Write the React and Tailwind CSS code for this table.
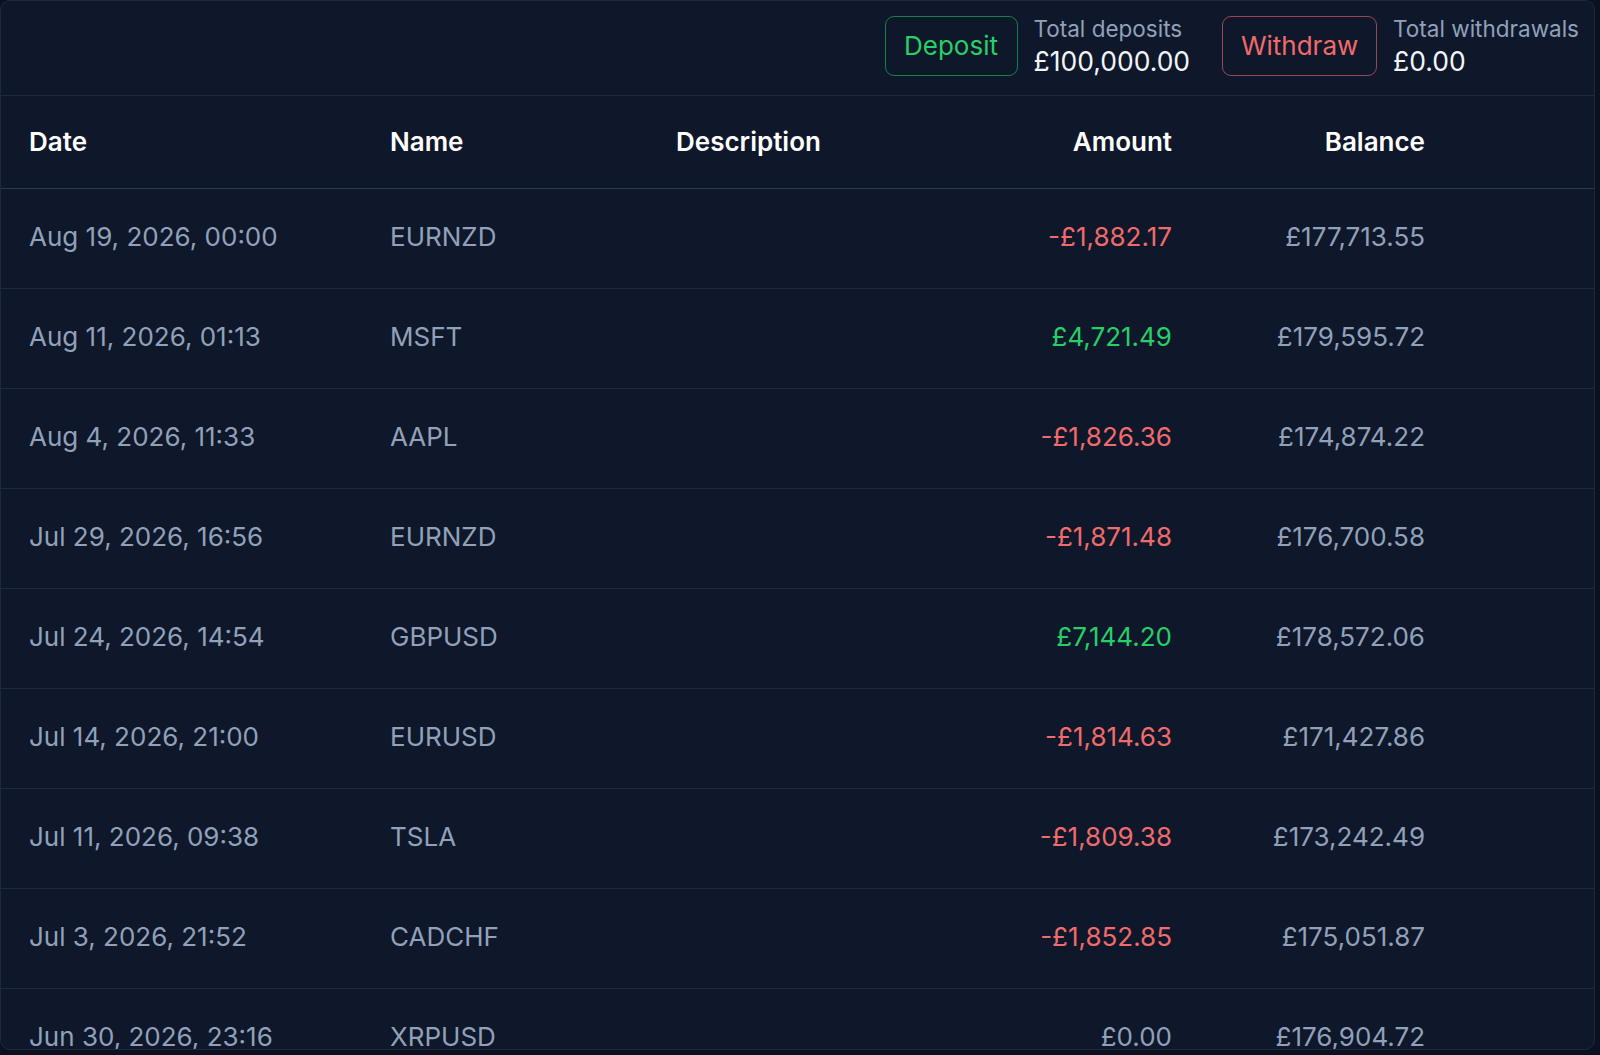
import React from "react";

// 交易流水表
const rows = [
  { date: "Aug 19, 2026, 00:00", name: "EURNZD", amount: -1882.17, balance: "£177,713.55" },
  { date: "Aug 11, 2026, 01:13", name: "MSFT", amount: 4721.49, balance: "£179,595.72" },
  { date: "Aug 4, 2026, 11:33", name: "AAPL", amount: -1826.36, balance: "£174,874.22" },
  { date: "Jul 29, 2026, 16:56", name: "EURNZD", amount: -1871.48, balance: "£176,700.58" },
  { date: "Jul 24, 2026, 14:54", name: "GBPUSD", amount: 7144.2, balance: "£178,572.06" },
  { date: "Jul 14, 2026, 21:00", name: "EURUSD", amount: -1814.63, balance: "£171,427.86" },
  { date: "Jul 11, 2026, 09:38", name: "TSLA", amount: -1809.38, balance: "£173,242.49" },
  { date: "Jul 3, 2026, 21:52", name: "CADCHF", amount: -1852.85, balance: "£175,051.87" },
  { date: "Jun 30, 2026, 23:16", name: "XRPUSD", amount: 0, balance: "£176,904.72" },
];

const fmt = (n) => {
  const s = Math.abs(n).toLocaleString("en-GB", { minimumFractionDigits: 2, maximumFractionDigits: 2 });
  return (n < 0 ? "-£" : "£") + s;
};

const amountColor = (n) => {
  if (n > 0) return "text-[#27cf67]";
  if (n < 0) return "text-[#f06b6b]";
  return "text-slate-400";
};

const App = () => {
  return (
    <div className="min-h-screen bg-[#0b1120] font-['Inter','Liberation_Sans',sans-serif]">
      <div className="w-[1595px] h-[1050px] rounded-[10px] border border-[#1e293b] bg-[#0f172a] flex flex-col overflow-hidden">
        {/* 顶部汇总 */}
        <div className="h-[95px] shrink-0 border-b border-[#1e293b] flex items-center justify-end pr-[15px] pb-[5px]">
          <button className="h-[60px] w-[133px] rounded-[9px] border border-[#22c55e]/60 text-[#27cf67] text-[26px]">
            Deposit
          </button>
          <div className="ml-[16px] flex flex-col">
            <span className="text-[22.5px] leading-[31px] text-slate-400">Total deposits</span>
            <span className="text-[26.5px] leading-[34px] text-slate-100">£100,000.00</span>
          </div>
          <button className="ml-[32px] h-[60px] w-[155px] rounded-[9px] border border-[#f06b6b]/60 text-[#f06b6b] text-[26px]">
            Withdraw
          </button>
          <div className="ml-[16px] flex flex-col">
            <span className="text-[22.5px] leading-[31px] text-slate-400">Total withdrawals</span>
            <span className="text-[26.5px] leading-[34px] text-slate-100">£0.00</span>
          </div>
        </div>

        <div className="flex-1 overflow-hidden">
          <table className="w-full table-fixed border-collapse text-[26px]">
            <colgroup>
              <col className="w-[361px]" />
              <col className="w-[286px]" />
              <col className="w-[303px]" />
              <col className="w-[250px]" />
              <col className="w-[253px]" />
              <col />
            </colgroup>
            <thead>
              <tr className="h-[92px] border-b border-[#2c3a4f] text-white">
                <th className="pl-[28px] text-left font-semibold">Date</th>
                <th className="pl-[28px] text-left font-semibold">Name</th>
                <th className="pl-[28px] text-left font-semibold">Description</th>
                <th className="pr-[29px] text-right font-semibold">Amount</th>
                <th className="pr-[29px] text-right font-semibold">Balance</th>
                <th />
              </tr>
            </thead>
            <tbody>
              {rows.map((r) => (
                <tr key={r.date} className="h-[100px] border-b border-[#1e293b] text-slate-400">
                  <td className="pl-[28px] pb-[4px] whitespace-nowrap">{r.date}</td>
                  <td className="pl-[28px] pb-[4px]">{r.name}</td>
                  <td className="pl-[28px] pb-[4px]"></td>
                  <td className={"pr-[29px] pb-[4px] text-right " + amountColor(r.amount)}>{fmt(r.amount)}</td>
                  <td className="pr-[29px] pb-[4px] text-right">{r.balance}</td>
                  <td />
                </tr>
              ))}
            </tbody>
          </table>
        </div>
      </div>
    </div>
  );
};

export default App;
